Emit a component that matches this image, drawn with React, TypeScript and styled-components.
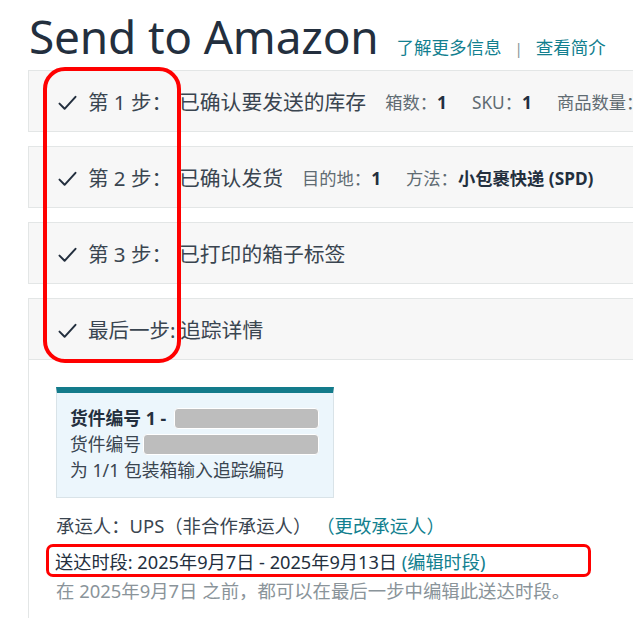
import styled, { createGlobalStyle } from "styled-components";

const GlobalStyle = createGlobalStyle`
  html, body {
    margin: 0;
    padding: 0;
    background: #fff;
    overflow: hidden;
  }
  body {
    font-family: "Noto Sans", "Noto Sans CJK SC", sans-serif;
    color: #232f3e;
  }
`;

const Page = styled.div`
  position: relative;
  width: 633px;
  height: 618px;
  overflow: hidden;
  padding: 8px 0 0 28px;
  box-sizing: border-box;
`;

const Header = styled.div`
  display: flex;
  align-items: baseline;
  gap: 18px;
  height: 62px;
`;

const Title = styled.h1`
  margin: 0 0 0 1px;
  font-size: 46px;
  font-weight: 400;
  letter-spacing: -0.2px;
  line-height: 56px;
  color: #232f3e;
`;

const Links = styled.div`
  display: flex;
  align-items: baseline;
  gap: 13px;
  font-size: 17.5px;
  color: #127f8f;
  white-space: nowrap;
`;

const Sep = styled.span`
  color: #8b959a;
  font-size: 15px;
`;

const Steps = styled.div`
  display: flex;
  flex-direction: column;
  gap: 14px;
  width: 640px;
`;

const Panel = styled.div`
  background: #f7f7f7;
  border: 1px solid #e3e6e6;
  height: 60px;
  display: flex;
  align-items: center;
  padding-left: 29px;
  white-space: nowrap;
`;

const FinalPanel = styled.div`
  border: 1px solid #e3e6e6;
  border-bottom: none;
`;

const FinalHeader = styled(Panel)`
  border: none;
  border-bottom: 1px solid #e3e6e6;
`;

const Check = styled.svg`
  width: 19px;
  height: 16px;
  flex: none;
  margin-right: 11px;
  margin-top: 3px;
`;

const StepLabel = styled.span<{ $width?: number }>`
  font-size: 20.5px;
  color: #3a4550;
  width: ${(p) => p.$width ?? 91}px;
  flex: none;
`;

const StepTitle = styled.span`
  font-size: 20.8px;
  color: #3a4550;
  margin-right: 19px;
`;

const Meta = styled.span`
  font-size: 17.3px;
  color: #5f6b72;
  margin-right: 25px;
`;

const Val = styled.b`
  color: #232f3e;
  font-weight: 700;
`;

const Body = styled.div`
  padding: 27px 0 0 27px;
  height: 260px;
`;

const Card = styled.div`
  width: 278px;
  height: 111px;
  background: #ecf6fc;
  border: 1px solid #d9e3e8;
  border-top: 6px solid #137b8b;
  padding: 12px 14px 0 13px;
  box-sizing: border-box;
  font-size: 17.8px;
  color: #3a4550;
  line-height: 26px;
`;

const CardLine = styled.div<{ $bold?: boolean }>`
  display: flex;
  align-items: center;
  font-weight: ${(p) => (p.$bold ? 700 : 400)};
  color: ${(p) => (p.$bold ? "#232f3e" : "#3a4550")};
  white-space: nowrap;
`;

const Redacted = styled.span<{ $gap?: number }>`
  flex: 1;
  height: 19px;
  background: #bdbdbd;
  border: 1px solid #fff;
  border-radius: 4px;
  margin-left: ${(p) => p.$gap ?? 2}px;
`;

const InfoLine = styled.div`
  font-size: 18.4px;
  color: #3a4550;
  white-space: nowrap;
  line-height: 27px;
`;

const Carrier = styled(InfoLine)`
  margin-top: 14px;
`;

const Link = styled.span`
  color: #127f8f;
`;

const Highlight = styled.div`
  margin: 5px 0 0 -10px;
  width: 533px;
  height: 27px;
  border: 3.5px solid #ff0000;
  border-radius: 7px;
  padding: 0 0 0 6px;
  display: flex;
  align-items: center;
  font-size: 18.2px;
  color: #232f3e;
  white-space: nowrap;
`;

const Hint = styled(InfoLine)`
  color: #8a949a;
  margin-top: 0;
`;

const StepRing = styled.div`
  position: absolute;
  left: 43px;
  top: 67px;
  width: 130px;
  height: 288px;
  border: 4px solid #ff0000;
  border-radius: 22px;
  pointer-events: none;
`;

const CheckIcon = () => (
  <Check viewBox="0 0 19 16">
    <polyline
      points="1.5,8.6 6.6,13.8 17.5,1.8"
      fill="none"
      stroke="#232f3e"
      strokeWidth="2"
      strokeLinecap="round"
      strokeLinejoin="round"
    />
  </Check>
);

export default function App() {
  return (
    <>
      <GlobalStyle />
      <Page>
        <Header>
          <Title>Send to Amazon</Title>
          <Links>
            <span>了解更多信息</span>
            <Sep>|</Sep>
            <span>查看简介</span>
          </Links>
        </Header>
        <Steps>
          <Panel>
            <CheckIcon />
            <StepLabel>第 1 步：</StepLabel>
            <StepTitle>已确认要发送的库存</StepTitle>
            <Meta>
              箱数：<Val>1</Val>
            </Meta>
            <Meta>
              SKU：<Val>1</Val>
            </Meta>
            <Meta>
              商品数量：<Val>1</Val>
            </Meta>
          </Panel>
          <Panel>
            <CheckIcon />
            <StepLabel>第 2 步：</StepLabel>
            <StepTitle>已确认发货</StepTitle>
            <Meta>
              目的地：<Val>1</Val>
            </Meta>
            <Meta>
              方法：<Val>小包裹快递 (SPD)</Val>
            </Meta>
          </Panel>
          <Panel>
            <CheckIcon />
            <StepLabel>第 3 步：</StepLabel>
            <StepTitle>已打印的箱子标签</StepTitle>
          </Panel>
          <FinalPanel>
            <FinalHeader>
              <CheckIcon />
              <StepLabel $width={92}>最后一步:</StepLabel>
              <StepTitle>追踪详情</StepTitle>
            </FinalHeader>
            <Body>
              <Card>
                <CardLine $bold>
                  货件编号 1 -<Redacted $gap={8} />
                </CardLine>
                <CardLine>
                  货件编号<Redacted />
                </CardLine>
                <CardLine>为 1/1 包装箱输入追踪编码</CardLine>
              </Card>
              <Carrier>
                承运人：UPS（非合作承运人） <Link>（更改承运人）</Link>
              </Carrier>
              <Highlight>
                送达时段: 2025年9月7日 - 2025年9月13日&nbsp;<Link>(编辑时段)</Link>
              </Highlight>
              <Hint>在 2025年9月7日 之前，都可以在最后一步中编辑此送达时段。</Hint>
            </Body>
          </FinalPanel>
        </Steps>
        <StepRing />
      </Page>
    </>
  );
}
